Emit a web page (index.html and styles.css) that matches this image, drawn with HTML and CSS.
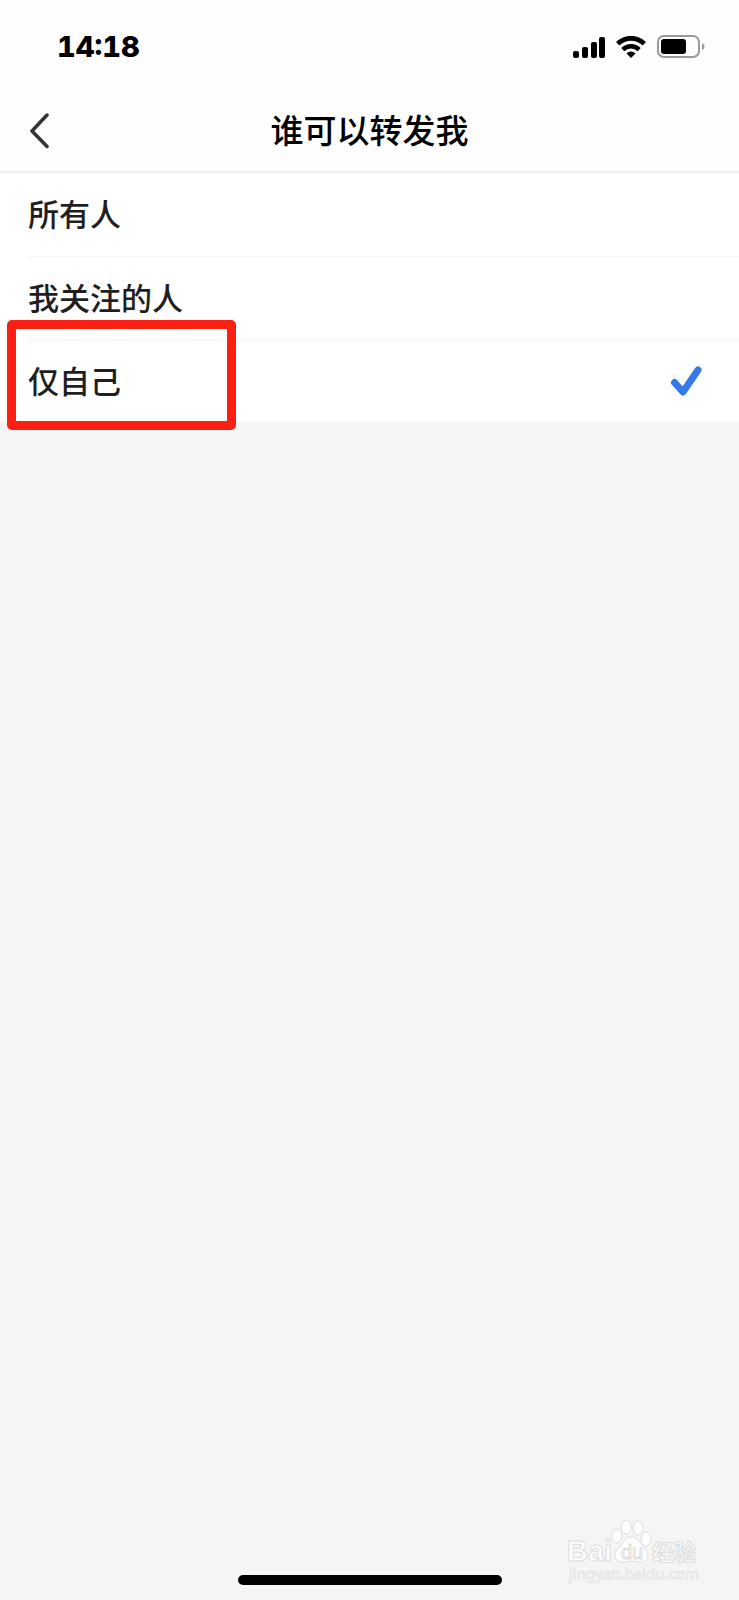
FILE: index.html
```
<!DOCTYPE html>
<html lang="zh-CN">
<head>
    <meta charset="UTF-8">
    <meta name="viewport" content="width=device-width, initial-scale=1.0">
    <title>谁可以转发我</title>
    <link rel="stylesheet" href="styles.css">
</head>
<body>
    <div class="status-bar">
        <span class="time">14:18</span>
        <div class="status-icons">
            <svg class="signal" width="32" height="22" viewBox="0 0 32 22">
                <rect x="0" y="15" width="6" height="7" rx="2"/>
                <rect x="9" y="11" width="6" height="11" rx="2"/>
                <rect x="18" y="6" width="6" height="16" rx="2"/>
                <rect x="26" y="1" width="6" height="21" rx="2"/>
            </svg>
            <svg class="wifi" width="30" height="22" viewBox="0 0 30 22">
                <path d="M1.700 7.700a19 19 0 0 1 26.600 0" fill="none" stroke="#000" stroke-width="4.800"/>
                <path d="M6.800 13.600a11.800 11.800 0 0 1 16.400 0" fill="none" stroke="#000" stroke-width="4.400"/>
                <path d="M15 22l-4.500-4.600a6.500 6.500 0 0 1 9 0z"/>
            </svg>
            <svg class="battery" width="48" height="24" viewBox="0 0 48 24">
                <rect x="1" y="1" width="41" height="21" rx="6" fill="none" stroke="#999" stroke-width="2"/>
                <rect x="4" y="4" width="25" height="15" rx="3"/>
                <path d="M45 8q2.500 1 2.500 3.500t-2.500 3.500z" fill="#999"/>
            </svg>
        </div>
    </div>

    <header class="header">
        <button class="back" type="button" aria-label="返回">
            <svg width="20" height="36" viewBox="0 0 20 36">
                <path d="M17 2L2 18l15 15.500" fill="none" stroke="#333" stroke-width="3.500" stroke-linecap="round" stroke-linejoin="round"/>
            </svg>
        </button>
        <h1>谁可以转发我</h1>
    </header>

    <main class="options">
        <label class="option">
            <span>所有人</span>
            <input type="radio" name="forward" value="all">
        </label>
        <label class="option">
            <span>我关注的人</span>
            <input type="radio" name="forward" value="following">
        </label>
        <label class="option marked">
            <span>仅自己</span>
            <input type="radio" name="forward" value="self" checked>
            <svg class="check" width="32" height="32" viewBox="0 0 32 32">
                <path d="M4.500 18.500l8.500 9.500L28 6" fill="none" stroke="#3478ea" stroke-width="7" stroke-linecap="round" stroke-linejoin="round"/>
            </svg>
        </label>
    </main>

    <div class="watermark">
        <svg width="136" height="68" viewBox="0 0 136 68">
            <g fill="#fff" stroke="#dcdcdc" stroke-width="1">
                <ellipse cx="50" cy="18" rx="5" ry="7"/>
                <ellipse cx="59" cy="9" rx="5" ry="7"/>
                <ellipse cx="71" cy="10" rx="5" ry="7"/>
                <ellipse cx="79" cy="21" rx="5" ry="7"/>
                <path d="M64 19c7 0 9 7 14 12 6 6 2 13-5 13-4 0-6-1-9-1s-5 1-9 1c-7 0-10-7-4-13 5-5 6-12 13-12z"/>
                <text class="mark-name" x="0" y="43">Bai</text>
                <text class="mark-du" x="54" y="41">du</text>
                <text class="mark-cjk" x="85" y="42">经验</text>
                <text class="mark-url" x="2" y="61">jingyan.baidu.com</text>
            </g>
        </svg>
    </div>

    <div class="home-bar"></div>
</body>
</html>
```
FILE: styles.css
```
*, *::after {
    box-sizing: border-box;
}
body {
    margin: 0;
    min-height: 100vh;
    display: flex;
    flex-direction: column;
    position: relative;
    background-color: #f5f5f5;
    color: #1f1f1f;
    font-family: "Noto Sans CJK SC", sans-serif;
}
.status-bar {
    display: flex;
    justify-content: space-between;
    align-items: center;
    height: 92px;
    padding: 2px 34px 0 57px;
    background-color: #fefefe;
}
.time {
    font-family: Inter, sans-serif;
    font-size: 29px;
    font-weight: 800;
    font-variant-numeric: tabular-nums;
    line-height: 36px;
    color: #000;
}
.status-icons {
    display: flex;
    align-items: center;
    gap: 11px;
}
.header {
    display: grid;
    grid-template-columns: 60px 1fr 60px;
    align-items: center;
    height: 81px;
    padding-bottom: 2px;
    background-color: #fefefe;
    border-bottom: 2px solid #f2f2f2;
}
.back {
    display: flex;
    padding: 0 0 0 30px;
    border: none;
    background: none;
    cursor: pointer;
}
.header h1 {
    margin: 0;
    padding-bottom: 4px;
    font-size: 33px;
    font-weight: 500;
    line-height: 48px;
    text-align: center;
    color: #000;
}
.options {
    background-color: #fff;
}
.option {
    display: flex;
    justify-content: space-between;
    align-items: center;
    position: relative;
    height: 83px;
    margin-left: 28px;
    padding: 0 37px 3px 0;
    font-size: 31px;
    font-weight: 500;
    line-height: 44px;
    cursor: pointer;
}
.option + .option {
    border-top: 1px solid #f2f2f2;
}
.option input {
    appearance: none;
    width: 0;
    height: 0;
    margin: 0 0 0 auto;
}
/* red frame drawn over the selected row */
.marked::after {
    content: "";
    position: absolute;
    top: -20px;
    left: -21px;
    width: 229px;
    height: 110px;
    border: 9px solid #fc2013;
    border-radius: 5px;
    pointer-events: none;
}
.watermark {
    position: absolute;
    right: 36px;
    bottom: 14px;
}
.watermark svg {
    display: block;
}
.mark-name {
    font-family: "Liberation Sans", sans-serif;
    font-size: 29px;
    font-weight: 700;
}
.mark-du {
    font-family: "Liberation Sans", sans-serif;
    font-size: 20px;
}
.mark-cjk {
    font-size: 22px;
    font-weight: 700;
}
.mark-url {
    font-family: "Noto Sans", sans-serif;
    font-size: 15px;
    stroke: #e6e6e6;
}
.home-bar {
    width: 264px;
    height: 10px;
    margin: auto auto 15px;
    border-radius: 5px;
    background-color: #000;
}
```
